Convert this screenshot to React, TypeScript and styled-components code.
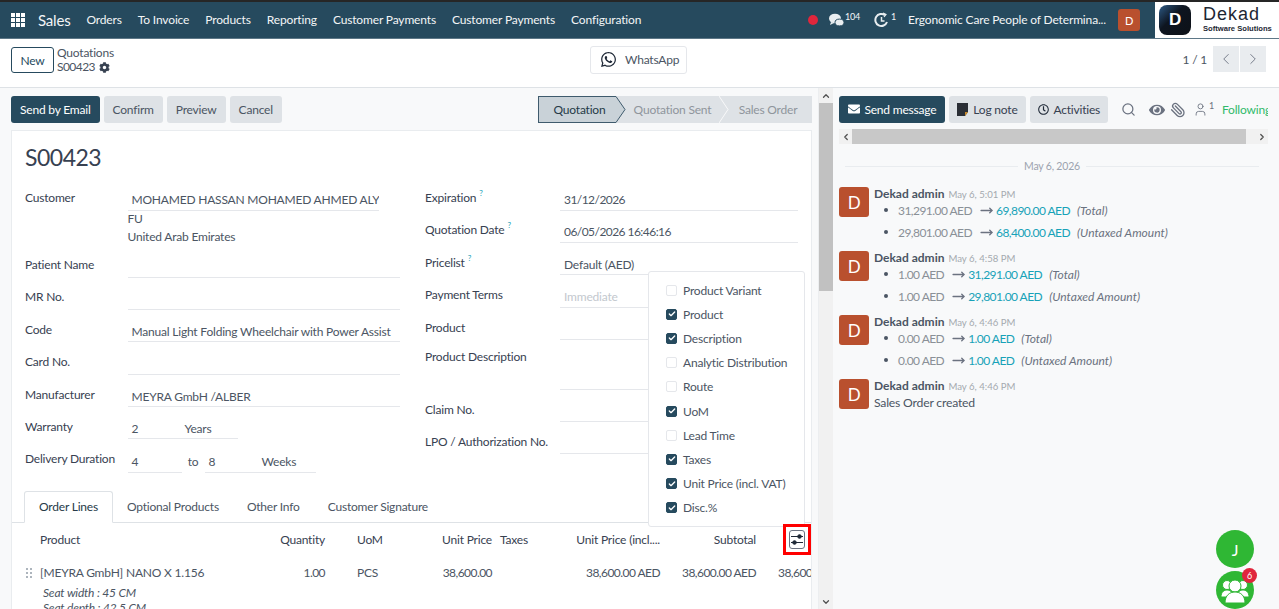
import React from 'react';
import styled, { createGlobalStyle, css } from 'styled-components';
import { FaWhatsapp, FaCog, FaEnvelope, FaEye, FaRegClock } from 'react-icons/fa';
import { Search, User, ChevronLeft, ChevronRight, ChevronUp, ChevronDown, MoveRight, Check, Paperclip } from 'lucide-react';

const Global = createGlobalStyle`
  html, body { margin: 0; padding: 0; height: 100%; overflow: hidden; background: #fff; }
  body { font-family: Lato, "Noto Sans", "Liberation Sans", sans-serif; font-size: 12px; letter-spacing: -0.2px; color: #4b5563; }
  button { letter-spacing: inherit; }
  * { box-sizing: border-box; }
`;

const tightDigits = css`letter-spacing: -0.55px;`;

const Page = styled.div`width: 1279px; height: 609px; display: flex; flex-direction: column; overflow: hidden; position: relative;`;
const TopStrip = styled.div`height: 2px; background: #262626; flex: none;`;
const NavBar = styled.header`height: 37px; flex: none; background: #264a5e; display: flex; align-items: center; padding-left: 11px; color: #f3f5f6; border-bottom: 1px solid #5d7787;`;
const AppsGrid = styled.div`display: grid; grid-template-columns: repeat(3, 4px); grid-auto-rows: 4px; gap: 1px; margin-right: 13px;`;
const AppsDot = styled.span`background: #fff;`;
const Brand = styled.span`font-size: 15px; margin-right: 16px; margin-top: -1px;`;
const NavItem = styled.span`font-size: 12px; letter-spacing: -0.15px; margin-right: 16px; white-space: nowrap; margin-top: -1px;`;
const NavRight = styled.div`margin-left: auto; display: flex; align-items: center; height: 100%;`;
const RedDot = styled.span`width: 10px; height: 10px; border-radius: 50%; background: #e0263c; margin-right: 10px;`;
const NavIconWrap = styled.span<{ $gap: number }>`display: inline-flex; align-items: flex-start; margin-right: ${p => p.$gap}px; font-size: 9px; line-height: 9px; height: 17px;`;
const Avatar = styled.span`width: 22px; height: 22px; border-radius: 3px; background: #b9502e; color: #fff; display: flex; align-items: center; justify-content: center; font-size: 11px; margin: 0 15px 0 12px;`;
const LogoBox = styled.div`width: 124px; height: 100%; background: #fff; display: flex; align-items: center; padding-left: 4px; gap: 12px; color: #1d2733;`;
const LogoMark = styled.div`width: 32px; height: 30px; border-radius: 8px; background: linear-gradient(135deg, #2c5a86 0%, #0e1520 42%, #0d1117 100%); display: flex; align-items: center; justify-content: center; color: #fff; font-weight: 800; font-size: 17px; font-family: "Liberation Sans", sans-serif;`;
const LogoText = styled.div`display: flex; flex-direction: column; margin-top: -2px;`;
const LogoName = styled.span`font-size: 18px; line-height: 19px; letter-spacing: 1px; font-family: "Liberation Sans", sans-serif;`;
const LogoSub = styled.span`font-size: 7.6px; letter-spacing: 0; line-height: 10px; white-space: nowrap; font-weight: 700; font-family: "Liberation Sans", sans-serif;`;

const ControlPanel = styled.div`height: 49px; flex: none; background: #fff; border-bottom: 1px solid #dee2e6; display: grid; grid-template-columns: 1fr auto 1fr; align-items: center; padding: 0 13px 6px 11px;`;
const CpLeft = styled.div`display: flex; align-items: center; gap: 3px;`;
const NewBtn = styled.button`width: 43px; height: 26px; font: inherit; color: #264a5e; background: #fff; border: 1px solid #264a5e; border-radius: 3px; padding: 0;`;
const Crumbs = styled.div`display: flex; flex-direction: column; line-height: 14px;`;
const CrumbCurrent = styled.span`display: flex; align-items: center; gap: 4px; ${tightDigits}`;
const WaBtn = styled.button`width: 97px; height: 28px; font: inherit; color: #4b5563; background: #fff; border: 1px solid #e5e7eb; border-radius: 3px; display: flex; align-items: center; gap: 8px; padding: 0 0 1px 9px;`;
const Pager = styled.div`display: flex; align-items: center; justify-content: flex-end; gap: 6px; margin-top: -2px;`;
const PagerBtns = styled.div`display: flex; gap: 1px;`;
const PagerBtn = styled.span`width: 26px; height: 26px; background: #e9ecef; display: flex; align-items: center; justify-content: center; color: #6b7280;`;

const Body = styled.div`flex: 1; min-height: 0; display: flex; background: #f8f9fa;`;
const FormCol = styled.div`width: 818px; flex: none; padding: 8px 6px 0 11px; display: flex; flex-direction: column; position: relative; overflow: hidden;`;
const StatusBar = styled.div`display: flex; justify-content: space-between; height: 27px; flex: none;`;
const Actions = styled.div`display: flex; gap: 4px;`;
const ActionBtn = styled.button<{ $primary?: boolean }>`height: 27px; font: inherit; padding: 0 9px 1px; border: none; border-radius: 3px; background: ${p => (p.$primary ? '#264a5e' : '#dee2e6')}; color: ${p => (p.$primary ? '#fff' : '#4b5563')};`;
const Stages = styled.div`display: flex; height: 27px; background: #dee2e6; width: 274px; position: relative;`;
const StageCurrent = styled.span`width: 78px; flex: none; background: #c9d2d8; border: 1px solid #3f5b6d; border-right: none; display: flex; align-items: center; justify-content: center; color: #263a47; position: relative; padding: 0 0 1px 4px;`;
const StageTip = styled.svg`position: absolute; left: 100%; top: -1px; display: block;`;
const Stage = styled.span<{ $w: number; $pl?: number; $pr?: number }>`width: ${p => p.$w}px; flex: none; display: flex; align-items: center; justify-content: center; color: #8f959c; white-space: nowrap; padding: 0 ${p => p.$pr ?? 0}px 1px ${p => p.$pl ?? 0}px;`;
const StageDivider = styled.svg`position: absolute; left: 181px; top: 0; display: block;`;

const Sheet = styled.div`margin-top: 7px; flex: 1; background: #fff; border: 1px solid #e9ecef; border-bottom: none; overflow: hidden; min-height: 0;`;
const Title = styled.h1`margin: 0; font-size: 23px; letter-spacing: -0.5px; font-weight: 400; line-height: 30px; color: #374151; padding: 11px 0 0 13px; height: 58px;`;
const Groups = styled.div`display: grid; grid-template-columns: 400px 375px; padding-left: 13px; height: 295px;`;
const Group = styled.div`display: flex; flex-direction: column;`;
const Row = styled.div<{ $h?: number }>`height: ${p => p.$h ?? 32.4}px; width: 375px; display: grid; grid-template-columns: 102.5px 1fr; flex: none;`;
const RightRow = styled(Row)`grid-template-columns: 135px 1fr; width: 373px;`;
const Label = styled.div`line-height: 18px; color: #374151; white-space: nowrap;`;
const Help = styled.sup`color: #17a2b8; font-size: 8px; margin-left: 3px; vertical-align: 6px; line-height: 0;`;
const Field = styled.div<{ $w?: number; $h?: number; $muted?: boolean; $num?: boolean }>`height: ${p => p.$h ?? 21.5}px; width: ${p => (p.$w ? p.$w + 'px' : '100%')}; border-bottom: 1px solid #e5e7eb; line-height: 20px; padding: 1px 0 0 4px; white-space: nowrap; overflow: hidden; color: ${p => (p.$muted ? '#c3c8ce' : '#4b5563')}; ${p => p.$num && tightDigits}`;
const Address = styled.div`line-height: 18px; height: 45px; margin-top: -1px;`;
const Inline = styled.div`display: flex; height: 22px; margin-top: 1px;`;
const Num = styled.span`display: inline-block; width: 53px;`;
const To = styled.span`width: 23px; text-align: center; line-height: 22px;`;

const Tabs = styled.div`display: flex; height: 32px; border-bottom: 1px solid #dee2e6; padding-left: 12px; margin-top: 7px;`;
const Tab = styled.div<{ $active?: boolean }>`height: 32px; padding: 0 14px; line-height: ${p => (p.$active ? 30 : 32)}px; color: ${p => (p.$active ? '#263a47' : '#4b5563')}; ${p => p.$active ? 'border: 1px solid #dee2e6; border-bottom-color: #fff; border-radius: 3px 3px 0 0; background:#fff;' : ''}`;
const Line = styled.div`display: grid; grid-template-columns: 28px 240px 45px 100px 67px 70px 98px 96px 56px; white-space: nowrap;`;
const HeadLine = styled(Line)`height: 34px; align-items: center; color: #374151; padding-bottom: 2px;`;
const BodyLine = styled(Line)`height: 28px; align-items: start; line-height: 31px;`;
const CellR = styled.div<{ $num?: boolean }>`text-align: right; ${p => p.$num && tightDigits}`;
const CellL = styled.div<{ $pad?: number; $num?: boolean }>`padding-left: ${p => p.$pad ?? 0}px; ${p => p.$num && tightDigits}`;
const Grip = styled.div`display: grid; grid-template-columns: 2px 2px; grid-auto-rows: 2px; gap: 2px; justify-content: end; padding: 11px 8px 0 0;`;
const GripDot = styled.span`background: #adb5bd;`;
const SubLine = styled.div`font-style: italic; padding-left: 31px; line-height: 15px; color: #4b5563; white-space: nowrap;`;
const ToggleCell = styled.div`position: relative; height: 100%;`;
const RedBox = styled.div`position: absolute; left: 27px; top: 1px; width: 28px; height: 31px; border: 3px solid #f00; z-index: 6; background: #fff; display: flex; align-items: center; justify-content: center;`;
const ToggleIcon = styled.svg`display: block;`;

const Popover = styled.div`position: absolute; left: 648px; top: 183px; width: 157px; height: 256px; background: #fff; border: 1px solid #e5e7eb; border-radius: 3px; padding: 6px 0 0 17px; z-index: 5;`;
const PopRow = styled.div`display: flex; align-items: center; height: 24.2px; gap: 6px; white-space: nowrap;`;
const Box = styled.span<{ $on?: boolean }>`width: 11px; height: 11px; border-radius: 2px; display: flex; align-items: center; justify-content: center; background: ${p => (p.$on ? '#264a5e' : '#fff')}; border: 1px solid ${p => (p.$on ? '#264a5e' : '#e5e7eb')}; color: #fff;`;

const Scrollbar = styled.div`width: 15px; flex: none; background: #f1f1f1; display: flex; flex-direction: column; align-items: center; border-left: 1px solid #eceef0;`;
const ScrollEnd = styled.div`height: 15px; flex: none; display: flex; align-items: center; justify-content: center; color: #505050;`;
const ScrollThumb = styled.div`width: 100%; height: 188px; background: #c1c1c1; flex: none;`;
const ScrollTrack = styled.div`flex: 1;`;

const Chatter = styled.aside`flex: 1; min-width: 0; background: #f8f9fa; padding: 8px 0 0 6px; position: relative; overflow: hidden;`;
const ChatBar = styled.div`display: flex; align-items: center; height: 27px; gap: 4px; white-space: nowrap; overflow: hidden; width: 429px;`;
const ChatBtn = styled.button<{ $primary?: boolean; $w: number }>`width: ${p => p.$w}px; height: 27px; flex: none; font: inherit; border: none; border-radius: 3px; display: flex; align-items: center; justify-content: center; gap: 2px; padding: 0 0 1px; background: ${p => (p.$primary ? '#264a5e' : '#dee2e6')}; color: ${p => (p.$primary ? '#fff' : '#374151')};`;
const NoteIcon = styled.svg`display: block;`;
const ChatTools = styled.div`display: flex; align-items: center; margin-left: 9px; color: #6b7280;`;
const ToolSpace = styled.span<{ $w: number; $flip?: boolean }>`display: inline-flex; margin-right: ${p => p.$w}px; transform: ${p => (p.$flip ? 'scaleX(-1)' : 'none')};`;
const ToolSup = styled.span`font-size: 9px; align-self: flex-start; margin: -2px 8px 0 1px;`;
const Following = styled.span`color: #30b96b;`;
const HScroll = styled.div`display: flex; height: 15px; margin-top: 6px; width: 429px; background: #f1f1f1; align-items: center;`;
const HEnd = styled.div`width: 13px; flex: none; display: flex; justify-content: center; color: #505050;`;
const HThumb = styled.div`height: 100%; width: 394px; background: #c8c8c8; flex: none;`;
const DateSep = styled.div`display: flex; align-items: center; gap: 6px; width: 414px; margin: 14px 0 0 6px; color: #9ca3af; font-size: 10.5px; line-height: 16px;`;
const SepLine = styled.span`flex: 1; height: 1px; background: #e9ecef;`;
const DateGap = styled.div`height: 13px;`;
const Msg = styled.div`display: flex; gap: 5px; height: 64px;`;
const MsgAvatar = styled.div`width: 30px; height: 30px; border-radius: 3px; background: #b9502e; color: #fff; display: flex; align-items: center; justify-content: center; font-size: 17px; flex: none;`;
const MsgMain = styled.div`min-width: 0; flex: 1;`;
const MsgHead = styled.div`display: flex; align-items: baseline; gap: 4px; line-height: 14px; height: 14px;`;
const Author = styled.span`font-size: 12px; letter-spacing: 0; font-weight: 700; color: #4b5563;`;
const When = styled.span`font-size: 9.6px; letter-spacing: 0; color: #a4a9af;`;
const Bullet = styled.div`display: flex; align-items: center; height: 22px; margin-top: -2px; margin-bottom: 2px; padding-left: 10px; white-space: nowrap;`;
const Dot = styled.span`width: 4px; height: 4px; border-radius: 50%; background: #4b5563; margin-right: 10px;`;
const Old = styled.span`color: #8a9097; margin-right: 8px; ${tightDigits}`;
const New = styled.span`color: #17a2b8; margin: 0 7px 0 3px; ${tightDigits}`;
const Kind = styled.span`font-style: italic; color: #6b7280; letter-spacing: 0;`;
const Plain = styled.div`line-height: 20px; color: #4b5563; font-size: 12.2px;`;

const FloatBtn = styled.div<{ $top: number }>`position: absolute; left: 1216px; top: ${p => p.$top}px; width: 38px; height: 38px; border-radius: 50%; background: #2fb734; color: #fff; display: flex; align-items: center; justify-content: center; font-size: 16px; z-index: 6;`;
const FloatBadge = styled.span`position: absolute; right: -3px; top: -3px; width: 15px; height: 15px; border-radius: 50%; background: #e0263c; color: #fff; font-size: 9px; display: flex; align-items: center; justify-content: center;`;

const navItems = ['Orders', 'To Invoice', 'Products', 'Reporting', 'Customer Payments', 'Customer Payments', 'Configuration'];
const popItems: [string, boolean][] = [['Product Variant', false], ['Product', true], ['Description', true], ['Analytic Distribution', false], ['Route', false], ['UoM', true], ['Lead Time', false], ['Taxes', true], ['Unit Price (incl. VAT)', true], ['Disc.%', true]];
const messages = [
  { when: 'May 6, 5:01 PM', rows: [['31,291.00 AED', '69,890.00 AED', '(Total)'], ['29,801.00 AED', '68,400.00 AED', '(Untaxed Amount)']] },
  { when: 'May 6, 4:58 PM', rows: [['1.00 AED', '31,291.00 AED', '(Total)'], ['1.00 AED', '29,801.00 AED', '(Untaxed Amount)']] },
  { when: 'May 6, 4:46 PM', rows: [['0.00 AED', '1.00 AED', '(Total)'], ['0.00 AED', '1.00 AED', '(Untaxed Amount)']] },
];

export default function App() {
  return (
    <Page>
      <Global />
      <TopStrip />
      <NavBar>
        <AppsGrid>{Array.from({ length: 9 }).map((_, i) => <AppsDot key={i} />)}</AppsGrid>
        <Brand>Sales</Brand>
        {navItems.map((n, i) => <NavItem key={i}>{n}</NavItem>)}
        <NavRight>
          <RedDot />
          <NavIconWrap $gap={14}>
            <svg width="17" height="16" viewBox="0 0 17 16" fill="#e8edf0"><ellipse cx="7" cy="6.5" rx="6" ry="4.8" /><path d="M3 10l-1 3 4-2z" /><ellipse cx="11.5" cy="10.5" rx="4.5" ry="3.4" stroke="#264a5e" strokeWidth="1" /></svg>
            104
          </NavIconWrap>
          <NavIconWrap $gap={12}>
            <svg width="15" height="16" viewBox="0 0 15 16" fill="none" stroke="#e8edf0" strokeWidth="2"><path d="M11 3.2A6 6 0 1 0 13 10" /><path d="M7.5 5v4h3" strokeWidth="1.5" /><path d="M9 1l3 1.5-2 2.5" strokeWidth="1.2" /></svg>
            &nbsp;1
          </NavIconWrap>
          <NavItem style={{ marginRight: 0 }}>Ergonomic Care People of Determina...</NavItem>
          <Avatar>D</Avatar>
          <LogoBox>
            <LogoMark>D</LogoMark>
            <LogoText>
              <LogoName>Dekad</LogoName>
              <LogoSub>Software Solutions</LogoSub>
            </LogoText>
          </LogoBox>
        </NavRight>
      </NavBar>
      <ControlPanel>
        <CpLeft>
          <NewBtn>New</NewBtn>
          <Crumbs>
            <span>Quotations</span>
            <CrumbCurrent>S00423 <FaCog size={11} color="#374151" /></CrumbCurrent>
          </Crumbs>
        </CpLeft>
        <WaBtn><FaWhatsapp size={17} color="#1f2937" />WhatsApp</WaBtn>
        <Pager>
          1 / 1
          <PagerBtns>
            <PagerBtn><ChevronLeft size={18} strokeWidth={1.2} /></PagerBtn>
            <PagerBtn><ChevronRight size={18} strokeWidth={1.2} /></PagerBtn>
          </PagerBtns>
        </Pager>
      </ControlPanel>
      <Body>
        <FormCol>
          <StatusBar>
            <Actions>
              <ActionBtn $primary>Send by Email</ActionBtn>
              <ActionBtn>Confirm</ActionBtn>
              <ActionBtn>Preview</ActionBtn>
              <ActionBtn>Cancel</ActionBtn>
            </Actions>
            <Stages>
              <StageCurrent>
                Quotation
                <StageTip width="10" height="27" viewBox="0 0 10 27"><path d="M0 .5l9 13L0 26.5z" fill="#c9d2d8" /><path d="M0 .5l9 13L0 26.5" fill="none" stroke="#3f5b6d" /></StageTip>
              </StageCurrent>
              <Stage $w={112} $pl={1}>Quotation Sent</Stage>
              <Stage $w={84} $pr={4}>Sales Order</Stage>
              <StageDivider width="10" height="27" viewBox="0 0 10 27" fill="none" stroke="#f8f9fa"><path d="M0 0l9 13.5L0 27" /></StageDivider>
            </Stages>
          </StatusBar>
          <Sheet>
            <Title>S00423</Title>
            <Groups>
              <Group>
                <Row $h={22}><Label>Customer</Label><Field $w={251}>MOHAMED HASSAN MOHAMED AHMED ALY</Field></Row>
                <Row $h={45}><span /><Address>FU<br />United Arab Emirates</Address></Row>
                <Row><Label>Patient Name</Label><Field /></Row>
                <Row><Label>MR No.</Label><Field /></Row>
                <Row><Label>Code</Label><Field>Manual Light Folding Wheelchair with Power Assist</Field></Row>
                <Row><Label>Card No.</Label><Field /></Row>
                <Row><Label>Manufacturer</Label><Field>MEYRA GmbH /ALBER</Field></Row>
                <Row><Label>Warranty</Label><Field $w={110}><Num>2</Num>Years</Field></Row>
                <Row><Label>Delivery Duration</Label>
                  <Inline>
                    <Field $w={54}>4</Field>
                    <To>to</To>
                    <Field $w={111}><Num>8</Num>Weeks</Field>
                  </Inline>
                </Row>
              </Group>
              <Group>
                <RightRow><Label>Expiration<Help>?</Help></Label><Field $num>31/12/2026</Field></RightRow>
                <RightRow><Label>Quotation Date<Help>?</Help></Label><Field $num>06/05/2026 16:46:16</Field></RightRow>
                <RightRow><Label>Pricelist<Help>?</Help></Label><Field>Default (AED)</Field></RightRow>
                <RightRow><Label>Payment Terms</Label><Field $muted>Immediate</Field></RightRow>
                <RightRow $h={29}><Label>Product</Label><Field /></RightRow>
                <RightRow $h={53}><Label>Product Description</Label><Field $h={42} /></RightRow>
                <RightRow><Label>Claim No.</Label><Field /></RightRow>
                <RightRow><Label>LPO / Authorization No.</Label><Field /></RightRow>
              </Group>
            </Groups>
            <Tabs>
              <Tab $active>Order Lines</Tab>
              <Tab>Optional Products</Tab>
              <Tab>Other Info</Tab>
              <Tab>Customer Signature</Tab>
            </Tabs>
            <HeadLine>
              <span />
              <CellL>Product</CellL>
              <CellR>Quantity</CellR>
              <CellL $pad={32}>UoM</CellL>
              <CellR>Unit Price</CellR>
              <CellL $pad={8}>Taxes</CellL>
              <CellR>Unit Price (incl....</CellR>
              <CellR>Subtotal</CellR>
              <ToggleCell>
                <RedBox>
                  <ToggleIcon width="16" height="19" viewBox="0 0 16 19" fill="none" stroke="#1f2937">
                    <rect x="0.5" y="0.5" width="15" height="18" rx="2.5" stroke="#6b7280" />
                    <path d="M2 6.5h12M2 12.5h12" strokeWidth="1" />
                    <circle cx="10.5" cy="6.5" r="1.8" fill="#1f2937" />
                    <circle cx="5.5" cy="12.5" r="1.8" fill="#1f2937" />
                  </ToggleIcon>
                </RedBox>
              </ToggleCell>
            </HeadLine>
            <BodyLine>
              <Grip>{Array.from({ length: 6 }).map((_, i) => <GripDot key={i} />)}</Grip>
              <CellL>[MEYRA GmbH] NANO X 1.156</CellL>
              <CellR $num>1.00</CellR>
              <CellL $pad={32}>PCS</CellL>
              <CellR $num>38,600.00</CellR>
              <span />
              <CellR $num>38,600.00 AED</CellR>
              <CellR $num>38,600.00 AED</CellR>
              <CellL $pad={22} $num>38,600.00 AED</CellL>
            </BodyLine>
            <SubLine>Seat width : 45 CM</SubLine>
            <SubLine>Seat depth : 42.5 CM</SubLine>
          </Sheet>
          <Popover>
            {popItems.map(([t, on]) => (
              <PopRow key={t}>
                <Box $on={on}>{on && <Check size={8} strokeWidth={4} />}</Box>
                {t}
              </PopRow>
            ))}
          </Popover>
        </FormCol>
        <Scrollbar>
          <ScrollEnd><ChevronUp size={10} strokeWidth={3} /></ScrollEnd>
          <ScrollThumb />
          <ScrollTrack />
          <ScrollEnd><ChevronDown size={10} strokeWidth={3} /></ScrollEnd>
        </Scrollbar>
        <Chatter>
          <ChatBar>
            <ChatBtn $primary $w={106}><FaEnvelope size={12} />&nbsp;Send message</ChatBtn>
            <ChatBtn $w={77}>
              <NoteIcon width="11" height="13" viewBox="0 0 11 13"><path d="M0 0h11v9l-3 4H0z" fill="#2b2f36" /><path d="M8 13V9h3z" fill="#c98a2b" /></NoteIcon>
              &nbsp;Log note
            </ChatBtn>
            <ChatBtn $w={78}><FaRegClock size={11} color="#1f2937" />&nbsp;Activities</ChatBtn>
            <ChatTools>
              <ToolSpace $w={13}><Search size={15} /></ToolSpace>
              <ToolSpace $w={5}><FaEye size={16} /></ToolSpace>
              <ToolSpace $w={7} $flip><Paperclip size={16} /></ToolSpace>
              <User size={15} strokeWidth={1.4} />
              <ToolSup>1</ToolSup>
              <Following>Following</Following>
            </ChatTools>
          </ChatBar>
          <HScroll>
            <HEnd><ChevronLeft size={10} strokeWidth={3} /></HEnd>
            <HThumb />
            <HEnd style={{ marginLeft: 'auto' }}><ChevronRight size={10} strokeWidth={3} /></HEnd>
          </HScroll>
          <DateSep><SepLine />May 6, 2026<SepLine /></DateSep>
          <DateGap />
          {messages.map(m => (
            <Msg key={m.when}>
              <MsgAvatar>D</MsgAvatar>
              <MsgMain>
                <MsgHead><Author>Dekad admin</Author><When>{m.when}</When></MsgHead>
                {m.rows.map(r => (
                  <Bullet key={r[2]}><Dot /><Old>{r[0]}</Old><MoveRight size={13} strokeWidth={2.5} color="#6b7280" /><New>{r[1]}</New><Kind>{r[2]}</Kind></Bullet>
                ))}
              </MsgMain>
            </Msg>
          ))}
          <Msg>
            <MsgAvatar>D</MsgAvatar>
            <MsgMain>
              <MsgHead><Author>Dekad admin</Author><When>May 6, 4:46 PM</When></MsgHead>
              <Plain>Sales Order created</Plain>
            </MsgMain>
          </Msg>
        </Chatter>
      </Body>
      <FloatBtn $top={530}>J</FloatBtn>
      <FloatBtn $top={571}>
        <svg width="30" height="28" viewBox="0 0 30 28" fill="#fff" stroke="#2fb734" strokeWidth="1">
          <circle cx="7" cy="9" r="4.5" />
          <circle cx="23" cy="9" r="4.5" />
          <path d="M1 21c0-5 3-7 6-7s6 2 6 7z" />
          <path d="M17 21c0-5 3-7 6-7s6 2 6 7z" />
          <circle cx="15" cy="10" r="6" />
          <path d="M5 27c0-8 5-11 10-11s10 3 10 11z" />
        </svg>
        <FloatBadge>6</FloatBadge>
      </FloatBtn>
    </Page>
  );
}
